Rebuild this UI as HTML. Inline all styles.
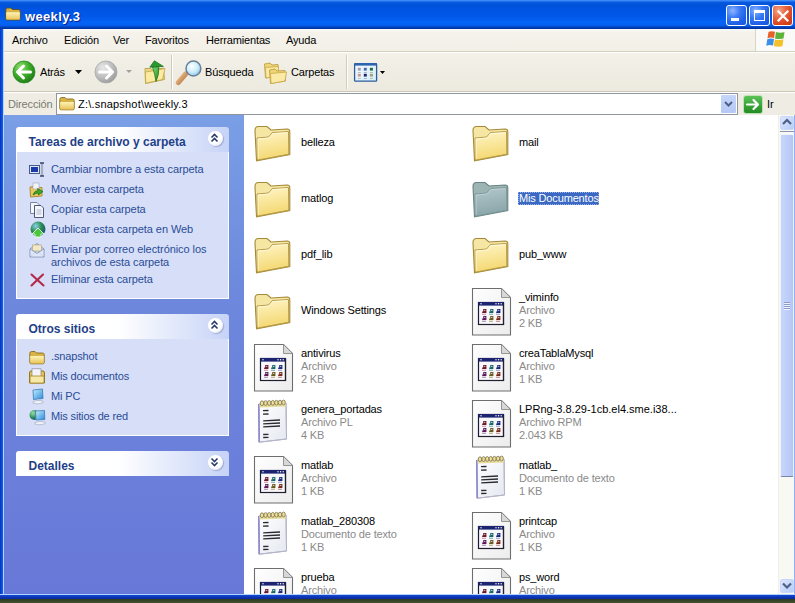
<!DOCTYPE html>
<html><head><meta charset="utf-8"><style>
*{margin:0;padding:0;box-sizing:border-box}
html,body{width:795px;height:603px;overflow:hidden}
body{position:relative;background:#5d6b3a;font-family:"Liberation Sans",sans-serif;font-size:11px;color:#000}
.a{position:absolute}
.t{position:absolute;white-space:nowrap;line-height:13px;font-size:11px;letter-spacing:-0.15px}
.lk{color:#2a4c98}
.g{color:#8a8a8a}
svg{position:absolute;overflow:visible}
</style></head><body>

<div class="a" style="left:0;top:599px;width:795px;height:4px;background:linear-gradient(#2e3a22,#44522e)"></div>
<div class="a" style="left:0;top:0;width:795px;height:599px;background:#0a3fd6"></div>
<div class="a" style="left:0;top:0;width:795px;height:29px;background:linear-gradient(#3c8cf8 0px,#3a83f5 1px,#0a5ae0 2px,#0052d8 5px,#0054e3 9px,#0057e8 16px,#0563f5 22px,#0461f2 25px,#0347c4 27px,#0035a8 28px,#0035a8 29px)"></div>
<div class="a" style="left:0;top:29px;width:3px;height:570px;background:linear-gradient(90deg,#0832b8,#0d4fe0 60%,#1661f0)"></div>
<div class="a" style="left:3px;top:29px;width:1px;height:565px;background:#b0d4ff"></div>
<div class="a" style="left:0;top:594px;width:795px;height:1px;background:#b0d4ff"></div>
<div class="a" style="left:0;top:595px;width:795px;height:4px;background:linear-gradient(#1448d6,#0c34b0 60%,#0a2a98)"></div>
<svg style="left:5px;top:7px" width="16" height="14" viewBox="0 0 16 14">
<defs><linearGradient id="tf" x1="0" y1="0" x2="0" y2="1"><stop offset="0" stop-color="#fff4b8"/><stop offset="1" stop-color="#e8c458"/></linearGradient></defs>
<path d="M0.8 3 Q0.8 1 2.5 1 L6 1 L7.5 2.5 L13.5 2.5 Q15.2 2.5 15.2 4 L15.2 11.8 Q15.2 13 13.8 13 L2.2 13 Q0.8 13 0.8 11.8 Z" fill="#d8b448" stroke="#5a4a20" stroke-width="0.9"/>
<path d="M1.2 5.3 L14.8 5.3 L14.8 11.8 Q14.8 12.6 14 12.6 L2 12.6 Q1.2 12.6 1.2 11.8 Z" fill="url(#tf)"/>
</svg>
<div class="t" style="left:25px;top:9px;font-size:13px;line-height:15px;font-weight:bold;color:#fff;letter-spacing:0.35px;text-shadow:1px 1px 0 #0a1e8a">weekly.3</div>
<div class="a" style="left:726px;top:5px;width:21px;height:21px;border:1px solid #fff;border-radius:3px;background:radial-gradient(circle at 30% 25%,#8fb4ff 0,#3d7df5 35%,#1f5fe8 70%,#1a55d8 100%)"></div>
<div class="a" style="left:749px;top:5px;width:21px;height:21px;border:1px solid #fff;border-radius:3px;background:radial-gradient(circle at 30% 25%,#8fb4ff 0,#3d7df5 35%,#1f5fe8 70%,#1a55d8 100%)"></div>
<div class="a" style="left:772px;top:5px;width:21px;height:21px;border:1px solid #fff;border-radius:3px;background:radial-gradient(circle at 30% 25%,#f5a98a 0,#e86a45 35%,#d8431e 70%,#c23a18 100%)"></div>
<div class="a" style="left:731px;top:18px;width:8px;height:3px;background:#fff"></div>
<div class="a" style="left:754px;top:10px;width:11px;height:11px;border:1px solid #fff;border-top-width:3px"></div>
<svg style="left:777px;top:10px" width="12" height="12" viewBox="0 0 12 12"><path d="M1.5 1.5 L10.5 10.5 M10.5 1.5 L1.5 10.5" stroke="#fff" stroke-width="2.2" stroke-linecap="square"/></svg>
<div class="a" style="left:4px;top:29px;width:791px;height:22px;background:linear-gradient(#f8fbfa,#f4f2ea 3px,#f2f0e7)"></div>
<div class="a" style="left:4px;top:51px;width:791px;height:1px;background:#d5d0bd"></div>
<div class="a" style="left:4px;top:52px;width:791px;height:1px;background:#fff"></div>
<div class="t" style="left:12px;top:34px">Archivo</div>
<div class="t" style="left:64px;top:34px">Edición</div>
<div class="t" style="left:113px;top:34px">Ver</div>
<div class="t" style="left:145px;top:34px">Favoritos</div>
<div class="t" style="left:206px;top:34px">Herramientas</div>
<div class="t" style="left:286px;top:34px">Ayuda</div>
<div class="a" style="left:755px;top:29px;width:1px;height:22px;background:#d8d4c4"></div>
<div class="a" style="left:756px;top:29px;width:39px;height:22px;background:#fafaf8"></div>
<svg style="left:766px;top:30px" width="20" height="18" viewBox="0 0 20 18">
<path d="M2.5 2 Q5 0.5 9 1.8 L8 8 Q4.5 7 1.5 8.2 Z" fill="#e8602a"/>
<path d="M10 2 Q13.5 3.2 18.5 2.2 L17.5 8.6 Q13 9.6 9 8.4 Z" fill="#5cb33a"/>
<path d="M1.3 9.2 Q4.5 8 8 9 L7 15.5 Q3.5 14.5 0.3 15.8 Z" fill="#3a8ee6"/>
<path d="M8.8 9.4 Q13 10.6 17.4 9.6 L16.4 16.2 Q12 17.2 7.8 16 Z" fill="#f3c22a"/>
</svg>
<div class="a" style="left:4px;top:53px;width:791px;height:39px;background:linear-gradient(#f3f1e8,#efede3 50%,#edebe0)"></div>
<div class="a" style="left:4px;top:91px;width:791px;height:1px;background:#cbc6b3"></div>
<div class="a" style="left:4px;top:92px;width:791px;height:1px;background:#fff"></div>
<svg style="left:12px;top:60px" width="24" height="24" viewBox="0 0 24 24">
<defs><radialGradient id="gb" cx="0.35" cy="0.3" r="0.75"><stop offset="0" stop-color="#9be07a"/><stop offset="0.5" stop-color="#3fae2a"/><stop offset="1" stop-color="#1f7a18"/></radialGradient></defs>
<circle cx="12" cy="12" r="11" fill="url(#gb)" stroke="#2a8a22" stroke-width="0.8"/>
<path d="M11.5 6 L5.5 12 L11.5 18 M6 12 L18.5 12" fill="none" stroke="#fff" stroke-width="3" stroke-linejoin="round" stroke-linecap="round"/>
</svg>
<div class="t" style="left:40px;top:66px">Atrás</div>
<svg style="left:75px;top:70px" width="7" height="4" viewBox="0 0 7 4"><path d="M0 0 L7 0 L3.5 4 Z" fill="#000"/></svg>
<svg style="left:94px;top:60px" width="24" height="24" viewBox="0 0 24 24">
<defs><radialGradient id="gf" cx="0.35" cy="0.3" r="0.75"><stop offset="0" stop-color="#e8e8e8"/><stop offset="0.6" stop-color="#bdbdbd"/><stop offset="1" stop-color="#9a9a9a"/></radialGradient></defs>
<circle cx="12" cy="12" r="11" fill="url(#gf)" stroke="#a8a8a8" stroke-width="0.8"/>
<path d="M12.5 6 L18.5 12 L12.5 18 M18 12 L5.5 12" fill="none" stroke="#fff" stroke-width="3" stroke-linejoin="round" stroke-linecap="round"/>
</svg>
<svg style="left:126px;top:70px" width="6" height="3" viewBox="0 0 6 3"><path d="M0 0 L6 0 L3 3 Z" fill="#a0a0a0"/></svg>
<svg style="left:143px;top:59px" width="24" height="26" viewBox="0 0 24 26">
<defs><linearGradient id="ua" x1="0" y1="0" x2="1" y2="1"><stop offset="0" stop-color="#7ee07a"/><stop offset="1" stop-color="#1f8a1f"/></linearGradient></defs>
<path d="M2 9.5 L7.5 9.5 L9.5 11 L20.5 9 L21.5 20.5 L2.5 24.5 Z" fill="#f0d882" stroke="#b09840" stroke-width="0.8"/>
<path d="M2.3 13 L12 11.5 L22 9.5 L19.5 20.5 L2.8 24.2 Z" fill="#fbeaa0" stroke="#c0a448" stroke-width="0.8"/>
<path d="M9.5 8 L15.8 7.4 Q16.2 16 13 22.5 Q12 15.5 9.5 8 Z" fill="url(#ua)" stroke="#1a6a1a" stroke-width="0.7"/>
<path d="M6.8 8.2 L11.4 1.8 L20.4 7.4 Z" fill="#2a9a2a" stroke="#1a6a1a" stroke-width="0.7"/>
</svg>
<div class="a" style="left:171px;top:55px;width:1px;height:34px;background:#d0ccbc"></div>
<div class="a" style="left:172px;top:55px;width:1px;height:34px;background:#fff"></div>
<svg style="left:172px;top:55px" width="34" height="34" viewBox="0 0 34 34">
<defs><radialGradient id="gs" cx="0.4" cy="0.35" r="0.7"><stop offset="0" stop-color="#ffffff"/><stop offset="0.55" stop-color="#cdeefa"/><stop offset="1" stop-color="#8ac8e8"/></radialGradient>
<linearGradient id="gh" x1="0" y1="0" x2="1" y2="1"><stop offset="0" stop-color="#f4c890"/><stop offset="1" stop-color="#b07040"/></linearGradient></defs>
<path d="M6.2 27.6 L13.6 19" stroke="url(#gh)" stroke-width="5" stroke-linecap="round"/>
<circle cx="21.4" cy="13.5" r="7.4" fill="url(#gs)" stroke="#6a7e98" stroke-width="1.5"/>
</svg>
<div class="t" style="left:205px;top:66px">Búsqueda</div>
<svg style="left:263px;top:61px" width="25" height="23" viewBox="0 0 25 23">
<path d="M1.5 3 L7 2 L9 4 L15 3.5 L15.5 15 L2.5 17 Z" fill="#f0d478" stroke="#b89838" stroke-width="0.8"/>
<path d="M2.5 6.5 L15.5 5.5 L15 15 L3 17 Z" fill="#fbe9a6" stroke="#c8a840" stroke-width="0.8"/>
<path d="M6.5 9 L12 8 L14 10 L22 9.5 L22.5 20 L7.5 22.5 Z" fill="#f0d478" stroke="#b89838" stroke-width="0.8"/>
<path d="M7.5 12.5 L23.5 11 L22 20 L8 22.5 Z" fill="#fbe9a6" stroke="#c8a840" stroke-width="0.8"/>
</svg>
<div class="t" style="left:291px;top:66px">Carpetas</div>
<div class="a" style="left:346px;top:55px;width:1px;height:34px;background:#d0ccbc"></div>
<div class="a" style="left:347px;top:55px;width:1px;height:34px;background:#fff"></div>
<svg style="left:350px;top:58px" width="30" height="28" viewBox="0 0 30 28">
<defs><linearGradient id="vb" x1="0" y1="0" x2="1" y2="1"><stop offset="0" stop-color="#f4fbff"/><stop offset="1" stop-color="#d4ecfa"/></linearGradient></defs>
<rect x="4.6" y="5.6" width="22" height="17.6" rx="0.8" fill="url(#vb)" stroke="#2c5c9c" stroke-width="1.3"/>
<rect x="4.6" y="5" width="22" height="2.6" fill="#2c64b0"/>
<rect x="7.8" y="9.8" width="3" height="2.8" fill="#a898b0"/><rect x="13.8" y="9.8" width="3" height="2.8" fill="#4a6ab0"/><rect x="19.9" y="9.8" width="3" height="2.8" fill="#2a6a3a"/>
<rect x="7.8" y="15.8" width="3" height="2.8" fill="#d09888"/><rect x="13.8" y="15.8" width="3" height="2.8" fill="#1a2a6a"/><rect x="19.9" y="15.8" width="3" height="2.8" fill="#a8a078"/>
<rect x="7.8" y="14.2" width="3" height="0.7" fill="#aaa"/><rect x="13.8" y="14.2" width="3" height="0.7" fill="#99a"/><rect x="19.9" y="14.2" width="3" height="0.7" fill="#9a9"/>
<rect x="7.8" y="20" width="3" height="0.7" fill="#aaa"/><rect x="13.8" y="20" width="3" height="0.7" fill="#99a"/><rect x="19.9" y="20" width="3" height="0.7" fill="#aa9"/>
</svg>
<svg style="left:380px;top:71px" width="5" height="3" viewBox="0 0 5 3"><path d="M0 0 L5 0 L2.5 3 Z" fill="#000"/></svg>
<div class="a" style="left:4px;top:93px;width:791px;height:22px;background:#efede3"></div>
<div class="t g" style="left:8px;top:98px;color:#7a7a70">Dirección</div>
<div class="a" style="left:56px;top:93px;width:682px;height:22px;background:#fff;border:1px solid #8f969e"></div>
<svg style="left:59px;top:96px" width="16" height="15" viewBox="0 0 16 15">
<defs><linearGradient id="af" x1="0" y1="0" x2="0" y2="1"><stop offset="0" stop-color="#fff4b8"/><stop offset="1" stop-color="#e8c458"/></linearGradient></defs>
<path d="M0.8 3.5 Q0.8 1.5 2.5 1.5 L6 1.5 L7.5 3 L13.5 3 Q15.2 3 15.2 4.5 L15.2 12.5 Q15.2 13.8 13.8 13.8 L2.2 13.8 Q0.8 13.8 0.8 12.5 Z" fill="#d8b448" stroke="#8a6a18" stroke-width="0.9"/>
<path d="M1.2 6 L14.8 6 L14.8 12.6 Q14.8 13.4 14 13.4 L2 13.4 Q1.2 13.4 1.2 12.6 Z" fill="url(#af)"/>
</svg>
<div class="t" style="left:78px;top:98px;letter-spacing:0.2px">Z:\.snapshot\weekly.3</div>
<div class="a" style="left:721px;top:95px;width:15px;height:18px;border-radius:1px;background:linear-gradient(#c6d6fa,#b4c8f4)"></div>
<svg style="left:724px;top:101px" width="9" height="6" viewBox="0 0 9 6"><path d="M1 1 L4.5 4.5 L8 1" fill="none" stroke="#4d6185" stroke-width="2"/></svg>
<svg style="left:743px;top:95px" width="20" height="19" viewBox="0 0 20 19">
<defs><linearGradient id="gg" x1="0" y1="0" x2="0" y2="1"><stop offset="0" stop-color="#5cc456"/><stop offset="1" stop-color="#1f8a22"/></linearGradient></defs>
<rect x="0.5" y="0.5" width="19" height="18" rx="2.5" fill="url(#gg)" stroke="#c8e8c0" stroke-width="0.8"/>
<path d="M4 9.5 L14.5 9.5 M10.5 5 L15 9.5 L10.5 14" fill="none" stroke="#fff" stroke-width="2.2" stroke-linecap="round" stroke-linejoin="round"/>
</svg>
<div class="t" style="left:767px;top:98px">Ir</div>
<div class="a" style="left:4px;top:115px;width:240px;height:479px;background:linear-gradient(#7a9fe6 0px,#6d88dc 180px,#6878d8 479px)"></div>
<div class="a" style="left:16px;top:127px;width:213px;height:25px;border-radius:3px 3px 0 0;background:linear-gradient(90deg,#ffffff 0%,#ffffff 48%,#c6d3f7 100%)"></div>
<div class="t" style="left:28.5px;top:135px;font-size:12px;line-height:14px;font-weight:bold;color:#1f3f88;letter-spacing:0">Tareas de archivo y carpeta</div>
<div class="a" style="left:207.5px;top:130.5px;width:15px;height:15px;border-radius:50%;background:radial-gradient(circle at 40% 35%,#ffffff 55%,#dde3f2 80%,#b8c2dc 100%);box-shadow:1px 1px 1px rgba(120,130,170,0.5)"></div>
<svg style="left:208px;top:132px" width="13" height="13" viewBox="0 0 13 13"><path d="M3.5 5.5 L6.5 2.5 L9.5 5.5 M3.5 9.5 L6.5 6.5 L9.5 9.5" fill="none" stroke="#2a3a6a" stroke-width="1.6"/></svg>
<div class="a" style="left:16px;top:152px;width:213px;height:147px;background:#d6dff7;border:1px solid #fff;border-top:0"></div>
<div class="a" style="left:16px;top:314px;width:213px;height:25px;border-radius:3px 3px 0 0;background:linear-gradient(90deg,#ffffff 0%,#ffffff 48%,#c6d3f7 100%)"></div>
<div class="t" style="left:28.5px;top:322px;font-size:12px;line-height:14px;font-weight:bold;color:#1f3f88;letter-spacing:0">Otros sitios</div>
<div class="a" style="left:207.5px;top:317.5px;width:15px;height:15px;border-radius:50%;background:radial-gradient(circle at 40% 35%,#ffffff 55%,#dde3f2 80%,#b8c2dc 100%);box-shadow:1px 1px 1px rgba(120,130,170,0.5)"></div>
<svg style="left:208px;top:319px" width="13" height="13" viewBox="0 0 13 13"><path d="M3.5 5.5 L6.5 2.5 L9.5 5.5 M3.5 9.5 L6.5 6.5 L9.5 9.5" fill="none" stroke="#2a3a6a" stroke-width="1.6"/></svg>
<div class="a" style="left:16px;top:339px;width:213px;height:97px;background:#d6dff7;border:1px solid #fff;border-top:0"></div>
<div class="a" style="left:16px;top:451px;width:213px;height:25px;border-radius:3px 3px 0 0;background:linear-gradient(90deg,#ffffff 0%,#ffffff 48%,#c6d3f7 100%)"></div>
<div class="t" style="left:28.5px;top:459px;font-size:12px;line-height:14px;font-weight:bold;color:#1f3f88;letter-spacing:0">Detalles</div>
<div class="a" style="left:207.5px;top:454.5px;width:15px;height:15px;border-radius:50%;background:radial-gradient(circle at 40% 35%,#ffffff 55%,#dde3f2 80%,#b8c2dc 100%);box-shadow:1px 1px 1px rgba(120,130,170,0.5)"></div>
<svg style="left:208px;top:456px" width="13" height="13" viewBox="0 0 13 13"><path d="M3.5 2.5 L6.5 5.5 L9.5 2.5 M3.5 6.5 L6.5 9.5 L9.5 6.5" fill="none" stroke="#2a3a6a" stroke-width="1.6"/></svg>
<div class="t lk" style="left:51px;top:163px;letter-spacing:-0.07px">Cambiar nombre a esta carpeta</div>
<div class="t lk" style="left:51px;top:183px;letter-spacing:-0.07px">Mover esta carpeta</div>
<div class="t lk" style="left:51px;top:203px;letter-spacing:-0.07px">Copiar esta carpeta</div>
<div class="t lk" style="left:51px;top:223px;letter-spacing:-0.07px">Publicar esta carpeta en Web</div>
<div class="t lk" style="left:51px;top:243px;letter-spacing:-0.07px">Enviar por correo electrónico los</div>
<div class="t lk" style="left:51px;top:256px;letter-spacing:-0.07px">archivos de esta carpeta</div>
<div class="t lk" style="left:51px;top:273px;letter-spacing:-0.07px">Eliminar esta carpeta</div>
<div class="t lk" style="left:51px;top:350px">.snapshot</div>
<div class="t lk" style="left:51px;top:370px">Mis documentos</div>
<div class="t lk" style="left:51px;top:390px">Mi PC</div>
<div class="t lk" style="left:51px;top:409.5px">Mis sitios de red</div>
<svg style="left:29px;top:162px" width="16" height="16" viewBox="0 0 16 16">
<rect x="0.5" y="3.5" width="10" height="8" fill="#dfe6f5" stroke="#4a5a8a"/>
<rect x="2" y="5" width="7" height="5" fill="#1a3aa8"/>
<path d="M11 1 L15 1 M13 1 L13 14 M11 14 L15 14" stroke="#3a4a6a" stroke-width="1.3" fill="none"/>
<rect x="11.5" y="2" width="3" height="11" fill="#c8cede" opacity="0.6"/>
</svg>
<svg style="left:29px;top:182px" width="16" height="16" viewBox="0 0 16 16">
<path d="M1 5 L6 4.5 L7 6 L13 5.5 L13 14 L1.5 15 Z" fill="#eac860" stroke="#9a7a20" stroke-width="0.8"/>
<rect x="4" y="1" width="6" height="6" fill="#f4f4f8" stroke="#a0a0b8" stroke-width="0.6"/>
<path d="M4 13 Q5 9 9 8.5 L8.5 6.5 L14 9.5 L9.5 13 L9.3 11 Q7 11 4 13 Z" fill="#3aa82a" stroke="#1a6a1a" stroke-width="0.7"/>
</svg>
<svg style="left:29px;top:202px" width="16" height="16" viewBox="0 0 16 16">
<path d="M1.5 0.5 L8 0.5 L10 2.5 L10 11.5 L1.5 11.5 Z" fill="#f4f6fb" stroke="#6a7a9a" stroke-width="0.9"/>
<path d="M5.5 3.5 L12 3.5 L14.5 6 L14.5 15.5 L5.5 15.5 Z" fill="#f4f6fb" stroke="#3a4a6a" stroke-width="0.9"/>
<path d="M7.5 8 L12.5 8 M7.5 10 L12.5 10 M7.5 12 L12.5 12" stroke="#9aaac8" stroke-width="0.8"/>
</svg>
<svg style="left:30px;top:221px" width="16" height="16" viewBox="0 0 16 16">
<defs><radialGradient id="glb" cx="0.35" cy="0.3" r="0.8"><stop offset="0" stop-color="#8ad0f0"/><stop offset="0.5" stop-color="#2a8a4a"/><stop offset="1" stop-color="#1a4a8a"/></radialGradient></defs>
<circle cx="8" cy="8" r="7.5" fill="url(#glb)"/>
<path d="M2 13 L8 7 L14 13 L11 13 L11 16 L5 16 L5 13 Z" fill="#4ac83a" stroke="#fff" stroke-width="0.8"/>
</svg>
<svg style="left:29px;top:242px" width="16" height="16" viewBox="0 0 16 16">
<path d="M1 7 L8 1.5 L15 7 L15 15 L1 15 Z" fill="#c8d8f0" stroke="#7a8ab0" stroke-width="0.8"/>
<rect x="3.5" y="3" width="9" height="6" fill="#f0e8c8" stroke="#b0a070" stroke-width="0.6"/>
<path d="M1 7 L8 11.5 L15 7 M1 15 L6.5 10 M15 15 L9.5 10" fill="none" stroke="#7a8ab0" stroke-width="0.8"/>
<path d="M1.5 7.5 L8 12 L14.5 7.5 L14.5 14.5 L1.5 14.5 Z" fill="#e8f0fc" opacity="0.7"/>
</svg>
<svg style="left:30px;top:273px" width="15" height="14" viewBox="0 0 15 14"><path d="M1.5 1.5 L13.5 12.5 M13 1.5 L1.5 12.5" stroke="#b42848" stroke-width="2.1" stroke-linecap="round"/></svg>
<svg style="left:29px;top:350px" width="16" height="15" viewBox="0 0 16 15">
<defs><linearGradient id="sf" x1="0" y1="0" x2="0" y2="1"><stop offset="0" stop-color="#fff4b8"/><stop offset="1" stop-color="#e8c458"/></linearGradient></defs>
<path d="M0.8 3.5 Q0.8 1.5 2.5 1.5 L6 1.5 L7.5 3 L13.5 3 Q15.2 3 15.2 4.5 L15.2 12.5 Q15.2 13.8 13.8 13.8 L2.2 13.8 Q0.8 13.8 0.8 12.5 Z" fill="#d8b448" stroke="#8a6a18" stroke-width="0.9"/>
<path d="M1.2 6 L14.8 6 L14.8 12.6 Q14.8 13.4 14 13.4 L2 13.4 Q1.2 13.4 1.2 12.6 Z" fill="url(#sf)"/>
</svg>
<svg style="left:29px;top:368px" width="16" height="16" viewBox="0 0 16 16">
<path d="M0.5 5 Q0.5 3 2 3 L14 3 Q15.5 3 15.5 5 L15.5 15 L0.5 15 Z" fill="#e8c050" stroke="#8a6a10" stroke-width="0.9"/>
<rect x="3" y="0.8" width="9" height="9" fill="#f4f4f8" stroke="#8a8aa0" stroke-width="0.7"/>
<path d="M1 8 L15 8 L15 15 L1 15 Z" fill="#f6e8a8" stroke="#a8841c" stroke-width="0.8"/>
</svg>
<svg style="left:30px;top:388px" width="16" height="17" viewBox="0 0 16 17">
<defs><linearGradient id="pcs" x1="0" y1="0" x2="1" y2="1"><stop offset="0" stop-color="#c8f0ff"/><stop offset="1" stop-color="#2a8ad8"/></linearGradient></defs>
<path d="M3 2 L12.5 1 L13 10.5 L3.5 11.5 Z" fill="url(#pcs)" stroke="#3a7ab8" stroke-width="0.8"/>
<path d="M3 13.5 Q8 11.5 13 13 L13 14.8 Q8 16.8 3 15.2 Z" fill="#f0f2f8" stroke="#9aa4b8" stroke-width="0.6"/>
<path d="M7 11.3 L9 11.1 L9 12.6 L7 12.8 Z" fill="#b8c0d0"/>
</svg>
<svg style="left:29px;top:408px" width="17" height="18" viewBox="0 0 17 18">
<defs><radialGradient id="nglb" cx="0.35" cy="0.3" r="0.8"><stop offset="0" stop-color="#9ae0a0"/><stop offset="0.6" stop-color="#2a8a5a"/><stop offset="1" stop-color="#1a4a8a"/></radialGradient>
<linearGradient id="nps" x1="0" y1="0" x2="1" y2="1"><stop offset="0" stop-color="#c8f0ff"/><stop offset="1" stop-color="#2a8ad8"/></linearGradient></defs>
<circle cx="5.5" cy="7" r="5" fill="url(#nglb)"/>
<path d="M6.5 3 L15.5 2.5 L15.8 11.5 L7 12 Z" fill="url(#nps)" stroke="#3a7ab8" stroke-width="0.8"/>
<path d="M6 14.5 Q11 12.5 16 14 L16 15.8 Q11 17.6 6 16.2 Z" fill="#f0f2f8" stroke="#9aa4b8" stroke-width="0.6"/>
</svg>
<div class="a" style="left:244px;top:115px;width:534px;height:479px;background:#fff"></div>
<div class="a" style="left:778px;top:115px;width:17px;height:479px;background:#f9f9f4;border-left:1px solid #efeee8"></div>
<div class="a" style="left:794px;top:115px;width:1px;height:479px;background:#94b0f4"></div>
<div class="a" style="left:780px;top:116px;width:14px;height:14px;border-radius:2px;background:linear-gradient(135deg,#dbe6ff,#b8ccf8);border:1px solid #c8d8fa"></div>
<svg style="left:780px;top:116px" width="14" height="13" viewBox="0 0 13 13"><path d="M2.5 8 L6.5 4 L10.5 8" fill="none" stroke="#4d6185" stroke-width="2.2"/></svg>
<div class="a" style="left:780px;top:131px;width:14px;height:1px;background:#8a94b0"></div>
<div class="a" style="left:780px;top:579px;width:14px;height:14px;border-radius:2px;background:linear-gradient(135deg,#dbe6ff,#b8ccf8);border:1px solid #c8d8fa"></div>
<svg style="left:780px;top:579px" width="14" height="13" viewBox="0 0 13 13"><path d="M2.5 4.5 L6.5 8.5 L10.5 4.5" fill="none" stroke="#4d6185" stroke-width="2.2"/></svg>
<div class="a" style="left:780px;top:134px;width:14px;height:343px;border-radius:2px;background:linear-gradient(90deg,#c8d6fb,#bccdf8 60%,#b4c6f4);border:1px solid #eef2fd;border-bottom:1px solid #7a84a4"></div>
<div class="a" style="left:784px;top:302px;width:6px;height:1px;background:#8c9cc8"></div>
<div class="a" style="left:784px;top:303px;width:6px;height:1px;background:#eef2fe"></div>
<div class="a" style="left:784px;top:304px;width:6px;height:1px;background:#8c9cc8"></div>
<div class="a" style="left:784px;top:305px;width:6px;height:1px;background:#eef2fe"></div>
<div class="a" style="left:784px;top:306px;width:6px;height:1px;background:#8c9cc8"></div>
<div class="a" style="left:784px;top:307px;width:6px;height:1px;background:#eef2fe"></div>
<div class="a" style="left:784px;top:308px;width:6px;height:1px;background:#8c9cc8"></div>
<div class="a" style="left:784px;top:309px;width:6px;height:1px;background:#eef2fe"></div>
<svg style="left:250px;top:120px" width="45" height="45" viewBox="0 0 45 45">
<defs><linearGradient id="fy250120" x1="0" y1="0" x2="0.2" y2="1"><stop offset="0" stop-color="#fff6c8"/><stop offset="1" stop-color="#f4d872"/></linearGradient></defs>
<path d="M5 10.5 Q5 6.5 8.5 6.5 L17 6.5 L21 10 L37 9 Q39.8 9 39.8 11.5 L39.8 34.5 L6.5 40.8 Z" fill="#f6e6a4" stroke="#a48a38" stroke-width="1.1"/>
<path d="M7 18 L18.5 17 L22.5 12.5 L38.5 11.5 L38.8 34.2 L7.2 40.2 Z" fill="url(#fy250120)" stroke="#b09440" stroke-width="0.9"/>
<path d="M8.2 38.5 L8 19 L19 18 L23 13.6 L37.5 12.7" fill="none" stroke="#fffbe8" stroke-width="0.9" opacity="0.8"/>
</svg>
<div class="t" style="left:301px;top:136.0px">belleza</div>
<svg style="left:468px;top:120px" width="45" height="45" viewBox="0 0 45 45">
<defs><linearGradient id="fy468120" x1="0" y1="0" x2="0.2" y2="1"><stop offset="0" stop-color="#fff6c8"/><stop offset="1" stop-color="#f4d872"/></linearGradient></defs>
<path d="M5 10.5 Q5 6.5 8.5 6.5 L17 6.5 L21 10 L37 9 Q39.8 9 39.8 11.5 L39.8 34.5 L6.5 40.8 Z" fill="#f6e6a4" stroke="#a48a38" stroke-width="1.1"/>
<path d="M7 18 L18.5 17 L22.5 12.5 L38.5 11.5 L38.8 34.2 L7.2 40.2 Z" fill="url(#fy468120)" stroke="#b09440" stroke-width="0.9"/>
<path d="M8.2 38.5 L8 19 L19 18 L23 13.6 L37.5 12.7" fill="none" stroke="#fffbe8" stroke-width="0.9" opacity="0.8"/>
</svg>
<div class="t" style="left:519px;top:136.0px">mail</div>
<svg style="left:250px;top:176px" width="45" height="45" viewBox="0 0 45 45">
<defs><linearGradient id="fy250176" x1="0" y1="0" x2="0.2" y2="1"><stop offset="0" stop-color="#fff6c8"/><stop offset="1" stop-color="#f4d872"/></linearGradient></defs>
<path d="M5 10.5 Q5 6.5 8.5 6.5 L17 6.5 L21 10 L37 9 Q39.8 9 39.8 11.5 L39.8 34.5 L6.5 40.8 Z" fill="#f6e6a4" stroke="#a48a38" stroke-width="1.1"/>
<path d="M7 18 L18.5 17 L22.5 12.5 L38.5 11.5 L38.8 34.2 L7.2 40.2 Z" fill="url(#fy250176)" stroke="#b09440" stroke-width="0.9"/>
<path d="M8.2 38.5 L8 19 L19 18 L23 13.6 L37.5 12.7" fill="none" stroke="#fffbe8" stroke-width="0.9" opacity="0.8"/>
</svg>
<div class="t" style="left:301px;top:192.0px">matlog</div>
<svg style="left:468px;top:176px" width="45" height="45" viewBox="0 0 45 45">
<defs><linearGradient id="fs468176" x1="0" y1="0" x2="0.2" y2="1"><stop offset="0" stop-color="#b4c8cc"/><stop offset="1" stop-color="#8aa6aa"/></linearGradient></defs>
<path d="M5 10.5 Q5 6.5 8.5 6.5 L17 6.5 L21 10 L37 9 Q39.8 9 39.8 11.5 L39.8 34.5 L6.5 40.8 Z" fill="#9db4b4" stroke="#6a8282" stroke-width="1.1"/>
<path d="M7 18 L18.5 17 L22.5 12.5 L38.5 11.5 L38.8 34.2 L7.2 40.2 Z" fill="url(#fs468176)" stroke="#7a9494" stroke-width="0.9"/>
<path d="M8.2 38.5 L8 19 L19 18 L23 13.6 L37.5 12.7" fill="none" stroke="#c4d4d8" stroke-width="0.9" opacity="0.8"/>
</svg>
<div class="a" style="left:518px;top:191.5px;width:81px;height:13px;background:#3a68c2;outline:1px dotted #9ab0e0;outline-offset:-1px"></div>
<div class="t" style="left:519px;top:192.0px;color:#fff">Mis Documentos</div>
<svg style="left:250px;top:232px" width="45" height="45" viewBox="0 0 45 45">
<defs><linearGradient id="fy250232" x1="0" y1="0" x2="0.2" y2="1"><stop offset="0" stop-color="#fff6c8"/><stop offset="1" stop-color="#f4d872"/></linearGradient></defs>
<path d="M5 10.5 Q5 6.5 8.5 6.5 L17 6.5 L21 10 L37 9 Q39.8 9 39.8 11.5 L39.8 34.5 L6.5 40.8 Z" fill="#f6e6a4" stroke="#a48a38" stroke-width="1.1"/>
<path d="M7 18 L18.5 17 L22.5 12.5 L38.5 11.5 L38.8 34.2 L7.2 40.2 Z" fill="url(#fy250232)" stroke="#b09440" stroke-width="0.9"/>
<path d="M8.2 38.5 L8 19 L19 18 L23 13.6 L37.5 12.7" fill="none" stroke="#fffbe8" stroke-width="0.9" opacity="0.8"/>
</svg>
<div class="t" style="left:301px;top:248.0px">pdf_lib</div>
<svg style="left:468px;top:232px" width="45" height="45" viewBox="0 0 45 45">
<defs><linearGradient id="fy468232" x1="0" y1="0" x2="0.2" y2="1"><stop offset="0" stop-color="#fff6c8"/><stop offset="1" stop-color="#f4d872"/></linearGradient></defs>
<path d="M5 10.5 Q5 6.5 8.5 6.5 L17 6.5 L21 10 L37 9 Q39.8 9 39.8 11.5 L39.8 34.5 L6.5 40.8 Z" fill="#f6e6a4" stroke="#a48a38" stroke-width="1.1"/>
<path d="M7 18 L18.5 17 L22.5 12.5 L38.5 11.5 L38.8 34.2 L7.2 40.2 Z" fill="url(#fy468232)" stroke="#b09440" stroke-width="0.9"/>
<path d="M8.2 38.5 L8 19 L19 18 L23 13.6 L37.5 12.7" fill="none" stroke="#fffbe8" stroke-width="0.9" opacity="0.8"/>
</svg>
<div class="t" style="left:519px;top:248.0px">pub_www</div>
<svg style="left:250px;top:288px" width="45" height="45" viewBox="0 0 45 45">
<defs><linearGradient id="fy250288" x1="0" y1="0" x2="0.2" y2="1"><stop offset="0" stop-color="#fff6c8"/><stop offset="1" stop-color="#f4d872"/></linearGradient></defs>
<path d="M5 10.5 Q5 6.5 8.5 6.5 L17 6.5 L21 10 L37 9 Q39.8 9 39.8 11.5 L39.8 34.5 L6.5 40.8 Z" fill="#f6e6a4" stroke="#a48a38" stroke-width="1.1"/>
<path d="M7 18 L18.5 17 L22.5 12.5 L38.5 11.5 L38.8 34.2 L7.2 40.2 Z" fill="url(#fy250288)" stroke="#b09440" stroke-width="0.9"/>
<path d="M8.2 38.5 L8 19 L19 18 L23 13.6 L37.5 12.7" fill="none" stroke="#fffbe8" stroke-width="0.9" opacity="0.8"/>
</svg>
<div class="t" style="left:301px;top:304.0px">Windows Settings</div>
<svg style="left:468px;top:284px" width="48" height="52" viewBox="0 0 48 52">
<defs><linearGradient id="pg472288" x1="0" y1="0" x2="1" y2="1"><stop offset="0" stop-color="#ffffff"/><stop offset="1" stop-color="#ececec"/></linearGradient></defs>
<path d="M4.5 4.5 L33.5 4.5 L42.5 13.5 L42.5 51 L4.5 51 Z" fill="url(#pg472288)" stroke="#6e6e6e" stroke-width="1.1"/>
<path d="M33.5 4.5 L33.5 13.5 L42.5 13.5 Z" fill="#d8d8d8" stroke="#8a8a8a" stroke-width="0.9"/>
<rect x="10.5" y="18.5" width="25" height="22" fill="#f8f8fa" stroke="#1a1a3a" stroke-width="1.2"/>
<rect x="10.5" y="18" width="25" height="3.6" fill="#1a2470"/>
<circle cx="13" cy="19.8" r="0.7" fill="#fff"/><circle cx="28" cy="19.8" r="0.7" fill="#fff"/><circle cx="30.6" cy="19.8" r="0.7" fill="#fff"/><circle cx="33.2" cy="19.8" r="0.7" fill="#fff"/>
<path d="M15.2 25 h3.2 v4 h-4.2 v-1.6 h1 z" fill="#6a1828"/><circle cx="16.8" cy="26.3" r="0.6" fill="#fff"/>
<path d="M22.2 25 h3.2 v4 h-4.2 v-1.6 h1 z" fill="#1a6a6a"/><circle cx="23.8" cy="26.3" r="0.6" fill="#fff"/>
<path d="M29.2 25 h3.2 v4 h-4.2 v-1.6 h1 z" fill="#1a2a80"/><circle cx="30.8" cy="26.3" r="0.6" fill="#fff"/>
<path d="M15.2 32 h3.2 v4 h-4.2 v-1.6 h1 z" fill="#5a1a5a"/><circle cx="16.8" cy="33.3" r="0.6" fill="#fff"/>
<path d="M22.2 32 h3.2 v4 h-4.2 v-1.6 h1 z" fill="#6a5a1a"/><circle cx="23.8" cy="33.3" r="0.6" fill="#fff"/>
<path d="M29.2 32 h3.2 v4 h-4.2 v-1.6 h1 z" fill="#7a2a1a"/><circle cx="30.8" cy="33.3" r="0.6" fill="#fff"/>
<rect x="14" y="29.8" width="4" height="0.8" fill="#c07080"/><rect x="21" y="29.8" width="4" height="0.8" fill="#608aa0"/><rect x="28" y="29.8" width="4" height="0.8" fill="#8080b0"/>
<rect x="14" y="36.8" width="4" height="0.8" fill="#906090"/><rect x="21" y="36.8" width="4" height="0.8" fill="#a09050"/><rect x="28" y="36.8" width="4" height="0.8" fill="#b06050"/>
<path d="M11 40.5 L35.5 40.5 L35.5 19" fill="none" stroke="#202030" stroke-width="1.2"/>
</svg>
<div class="t" style="left:519px;top:291.0px">_viminfo</div>
<div class="t g" style="left:519px;top:304.0px">Archivo</div>
<div class="t g" style="left:519px;top:317.0px">2 KB</div>
<svg style="left:250px;top:340px" width="48" height="52" viewBox="0 0 48 52">
<defs><linearGradient id="pg254344" x1="0" y1="0" x2="1" y2="1"><stop offset="0" stop-color="#ffffff"/><stop offset="1" stop-color="#ececec"/></linearGradient></defs>
<path d="M4.5 4.5 L33.5 4.5 L42.5 13.5 L42.5 51 L4.5 51 Z" fill="url(#pg254344)" stroke="#6e6e6e" stroke-width="1.1"/>
<path d="M33.5 4.5 L33.5 13.5 L42.5 13.5 Z" fill="#d8d8d8" stroke="#8a8a8a" stroke-width="0.9"/>
<rect x="10.5" y="18.5" width="25" height="22" fill="#f8f8fa" stroke="#1a1a3a" stroke-width="1.2"/>
<rect x="10.5" y="18" width="25" height="3.6" fill="#1a2470"/>
<circle cx="13" cy="19.8" r="0.7" fill="#fff"/><circle cx="28" cy="19.8" r="0.7" fill="#fff"/><circle cx="30.6" cy="19.8" r="0.7" fill="#fff"/><circle cx="33.2" cy="19.8" r="0.7" fill="#fff"/>
<path d="M15.2 25 h3.2 v4 h-4.2 v-1.6 h1 z" fill="#6a1828"/><circle cx="16.8" cy="26.3" r="0.6" fill="#fff"/>
<path d="M22.2 25 h3.2 v4 h-4.2 v-1.6 h1 z" fill="#1a6a6a"/><circle cx="23.8" cy="26.3" r="0.6" fill="#fff"/>
<path d="M29.2 25 h3.2 v4 h-4.2 v-1.6 h1 z" fill="#1a2a80"/><circle cx="30.8" cy="26.3" r="0.6" fill="#fff"/>
<path d="M15.2 32 h3.2 v4 h-4.2 v-1.6 h1 z" fill="#5a1a5a"/><circle cx="16.8" cy="33.3" r="0.6" fill="#fff"/>
<path d="M22.2 32 h3.2 v4 h-4.2 v-1.6 h1 z" fill="#6a5a1a"/><circle cx="23.8" cy="33.3" r="0.6" fill="#fff"/>
<path d="M29.2 32 h3.2 v4 h-4.2 v-1.6 h1 z" fill="#7a2a1a"/><circle cx="30.8" cy="33.3" r="0.6" fill="#fff"/>
<rect x="14" y="29.8" width="4" height="0.8" fill="#c07080"/><rect x="21" y="29.8" width="4" height="0.8" fill="#608aa0"/><rect x="28" y="29.8" width="4" height="0.8" fill="#8080b0"/>
<rect x="14" y="36.8" width="4" height="0.8" fill="#906090"/><rect x="21" y="36.8" width="4" height="0.8" fill="#a09050"/><rect x="28" y="36.8" width="4" height="0.8" fill="#b06050"/>
<path d="M11 40.5 L35.5 40.5 L35.5 19" fill="none" stroke="#202030" stroke-width="1.2"/>
</svg>
<div class="t" style="left:301px;top:347.0px">antivirus</div>
<div class="t g" style="left:301px;top:360.0px">Archivo</div>
<div class="t g" style="left:301px;top:373.0px">2 KB</div>
<svg style="left:468px;top:340px" width="48" height="52" viewBox="0 0 48 52">
<defs><linearGradient id="pg472344" x1="0" y1="0" x2="1" y2="1"><stop offset="0" stop-color="#ffffff"/><stop offset="1" stop-color="#ececec"/></linearGradient></defs>
<path d="M4.5 4.5 L33.5 4.5 L42.5 13.5 L42.5 51 L4.5 51 Z" fill="url(#pg472344)" stroke="#6e6e6e" stroke-width="1.1"/>
<path d="M33.5 4.5 L33.5 13.5 L42.5 13.5 Z" fill="#d8d8d8" stroke="#8a8a8a" stroke-width="0.9"/>
<rect x="10.5" y="18.5" width="25" height="22" fill="#f8f8fa" stroke="#1a1a3a" stroke-width="1.2"/>
<rect x="10.5" y="18" width="25" height="3.6" fill="#1a2470"/>
<circle cx="13" cy="19.8" r="0.7" fill="#fff"/><circle cx="28" cy="19.8" r="0.7" fill="#fff"/><circle cx="30.6" cy="19.8" r="0.7" fill="#fff"/><circle cx="33.2" cy="19.8" r="0.7" fill="#fff"/>
<path d="M15.2 25 h3.2 v4 h-4.2 v-1.6 h1 z" fill="#6a1828"/><circle cx="16.8" cy="26.3" r="0.6" fill="#fff"/>
<path d="M22.2 25 h3.2 v4 h-4.2 v-1.6 h1 z" fill="#1a6a6a"/><circle cx="23.8" cy="26.3" r="0.6" fill="#fff"/>
<path d="M29.2 25 h3.2 v4 h-4.2 v-1.6 h1 z" fill="#1a2a80"/><circle cx="30.8" cy="26.3" r="0.6" fill="#fff"/>
<path d="M15.2 32 h3.2 v4 h-4.2 v-1.6 h1 z" fill="#5a1a5a"/><circle cx="16.8" cy="33.3" r="0.6" fill="#fff"/>
<path d="M22.2 32 h3.2 v4 h-4.2 v-1.6 h1 z" fill="#6a5a1a"/><circle cx="23.8" cy="33.3" r="0.6" fill="#fff"/>
<path d="M29.2 32 h3.2 v4 h-4.2 v-1.6 h1 z" fill="#7a2a1a"/><circle cx="30.8" cy="33.3" r="0.6" fill="#fff"/>
<rect x="14" y="29.8" width="4" height="0.8" fill="#c07080"/><rect x="21" y="29.8" width="4" height="0.8" fill="#608aa0"/><rect x="28" y="29.8" width="4" height="0.8" fill="#8080b0"/>
<rect x="14" y="36.8" width="4" height="0.8" fill="#906090"/><rect x="21" y="36.8" width="4" height="0.8" fill="#a09050"/><rect x="28" y="36.8" width="4" height="0.8" fill="#b06050"/>
<path d="M11 40.5 L35.5 40.5 L35.5 19" fill="none" stroke="#202030" stroke-width="1.2"/>
</svg>
<div class="t" style="left:519px;top:347.0px">creaTablaMysql</div>
<div class="t g" style="left:519px;top:360.0px">Archivo</div>
<div class="t g" style="left:519px;top:373.0px">1 KB</div>
<svg style="left:252px;top:395px" width="44" height="52" viewBox="0 0 44 52">
<defs><linearGradient id="np252395" x1="0" y1="0" x2="1" y2="1"><stop offset="0" stop-color="#ffffff"/><stop offset="1" stop-color="#e4e8f0"/></linearGradient></defs>
<path d="M6.8 9 L34 8 L34.5 44 L7.2 47.2 Z" fill="url(#np252395)" stroke="#9a9ab8" stroke-width="0.9"/>
<path d="M6.8 9 L7.2 47.2" stroke="#8888cc" stroke-width="1.6"/>
<path d="M34.2 9 L34.5 44 L7.2 47.2" fill="none" stroke="#b8b8c8" stroke-width="0.9"/>
<path d="M7.5 8.5 L33.5 7.5 L33.8 11.5 L7.8 12.5 Z" fill="#e8dc9a"/>
<ellipse cx="10.0" cy="8.20" rx="1.7" ry="2.4" fill="#efe09a" stroke="#7a7050" stroke-width="0.8"/><ellipse cx="13.6" cy="8.08" rx="1.7" ry="2.4" fill="#efe09a" stroke="#7a7050" stroke-width="0.8"/><ellipse cx="17.2" cy="7.96" rx="1.7" ry="2.4" fill="#efe09a" stroke="#7a7050" stroke-width="0.8"/><ellipse cx="20.8" cy="7.84" rx="1.7" ry="2.4" fill="#efe09a" stroke="#7a7050" stroke-width="0.8"/><ellipse cx="24.4" cy="7.72" rx="1.7" ry="2.4" fill="#efe09a" stroke="#7a7050" stroke-width="0.8"/><ellipse cx="28.0" cy="7.60" rx="1.7" ry="2.4" fill="#efe09a" stroke="#7a7050" stroke-width="0.8"/><ellipse cx="31.6" cy="7.48" rx="1.7" ry="2.4" fill="#efe09a" stroke="#7a7050" stroke-width="0.8"/>
<path d="M11 15.7 L16.5 15.5 M11 19.2 L16.5 19 M11.2 25.8 L28 25 M11.2 28.8 L28 28 M11.2 31.8 L28 31 M11.2 39.5 L16.5 39.3 M11.2 42.5 L16.5 42.3" stroke="#2a2a30" stroke-width="1.3"/>
</svg>
<div class="t" style="left:301px;top:403.0px">genera_portadas</div>
<div class="t g" style="left:301px;top:416.0px">Archivo PL</div>
<div class="t g" style="left:301px;top:429.0px">4 KB</div>
<svg style="left:468px;top:396px" width="48" height="52" viewBox="0 0 48 52">
<defs><linearGradient id="pg472400" x1="0" y1="0" x2="1" y2="1"><stop offset="0" stop-color="#ffffff"/><stop offset="1" stop-color="#ececec"/></linearGradient></defs>
<path d="M4.5 4.5 L33.5 4.5 L42.5 13.5 L42.5 51 L4.5 51 Z" fill="url(#pg472400)" stroke="#6e6e6e" stroke-width="1.1"/>
<path d="M33.5 4.5 L33.5 13.5 L42.5 13.5 Z" fill="#d8d8d8" stroke="#8a8a8a" stroke-width="0.9"/>
<rect x="10.5" y="18.5" width="25" height="22" fill="#f8f8fa" stroke="#1a1a3a" stroke-width="1.2"/>
<rect x="10.5" y="18" width="25" height="3.6" fill="#1a2470"/>
<circle cx="13" cy="19.8" r="0.7" fill="#fff"/><circle cx="28" cy="19.8" r="0.7" fill="#fff"/><circle cx="30.6" cy="19.8" r="0.7" fill="#fff"/><circle cx="33.2" cy="19.8" r="0.7" fill="#fff"/>
<path d="M15.2 25 h3.2 v4 h-4.2 v-1.6 h1 z" fill="#6a1828"/><circle cx="16.8" cy="26.3" r="0.6" fill="#fff"/>
<path d="M22.2 25 h3.2 v4 h-4.2 v-1.6 h1 z" fill="#1a6a6a"/><circle cx="23.8" cy="26.3" r="0.6" fill="#fff"/>
<path d="M29.2 25 h3.2 v4 h-4.2 v-1.6 h1 z" fill="#1a2a80"/><circle cx="30.8" cy="26.3" r="0.6" fill="#fff"/>
<path d="M15.2 32 h3.2 v4 h-4.2 v-1.6 h1 z" fill="#5a1a5a"/><circle cx="16.8" cy="33.3" r="0.6" fill="#fff"/>
<path d="M22.2 32 h3.2 v4 h-4.2 v-1.6 h1 z" fill="#6a5a1a"/><circle cx="23.8" cy="33.3" r="0.6" fill="#fff"/>
<path d="M29.2 32 h3.2 v4 h-4.2 v-1.6 h1 z" fill="#7a2a1a"/><circle cx="30.8" cy="33.3" r="0.6" fill="#fff"/>
<rect x="14" y="29.8" width="4" height="0.8" fill="#c07080"/><rect x="21" y="29.8" width="4" height="0.8" fill="#608aa0"/><rect x="28" y="29.8" width="4" height="0.8" fill="#8080b0"/>
<rect x="14" y="36.8" width="4" height="0.8" fill="#906090"/><rect x="21" y="36.8" width="4" height="0.8" fill="#a09050"/><rect x="28" y="36.8" width="4" height="0.8" fill="#b06050"/>
<path d="M11 40.5 L35.5 40.5 L35.5 19" fill="none" stroke="#202030" stroke-width="1.2"/>
</svg>
<div class="t" style="left:519px;top:403.0px;letter-spacing:0">LPRng-3.8.29-1cb.el4.sme.i38...</div>
<div class="t g" style="left:519px;top:416.0px">Archivo RPM</div>
<div class="t g" style="left:519px;top:429.0px">2.043 KB</div>
<svg style="left:250px;top:452px" width="48" height="52" viewBox="0 0 48 52">
<defs><linearGradient id="pg254456" x1="0" y1="0" x2="1" y2="1"><stop offset="0" stop-color="#ffffff"/><stop offset="1" stop-color="#ececec"/></linearGradient></defs>
<path d="M4.5 4.5 L33.5 4.5 L42.5 13.5 L42.5 51 L4.5 51 Z" fill="url(#pg254456)" stroke="#6e6e6e" stroke-width="1.1"/>
<path d="M33.5 4.5 L33.5 13.5 L42.5 13.5 Z" fill="#d8d8d8" stroke="#8a8a8a" stroke-width="0.9"/>
<rect x="10.5" y="18.5" width="25" height="22" fill="#f8f8fa" stroke="#1a1a3a" stroke-width="1.2"/>
<rect x="10.5" y="18" width="25" height="3.6" fill="#1a2470"/>
<circle cx="13" cy="19.8" r="0.7" fill="#fff"/><circle cx="28" cy="19.8" r="0.7" fill="#fff"/><circle cx="30.6" cy="19.8" r="0.7" fill="#fff"/><circle cx="33.2" cy="19.8" r="0.7" fill="#fff"/>
<path d="M15.2 25 h3.2 v4 h-4.2 v-1.6 h1 z" fill="#6a1828"/><circle cx="16.8" cy="26.3" r="0.6" fill="#fff"/>
<path d="M22.2 25 h3.2 v4 h-4.2 v-1.6 h1 z" fill="#1a6a6a"/><circle cx="23.8" cy="26.3" r="0.6" fill="#fff"/>
<path d="M29.2 25 h3.2 v4 h-4.2 v-1.6 h1 z" fill="#1a2a80"/><circle cx="30.8" cy="26.3" r="0.6" fill="#fff"/>
<path d="M15.2 32 h3.2 v4 h-4.2 v-1.6 h1 z" fill="#5a1a5a"/><circle cx="16.8" cy="33.3" r="0.6" fill="#fff"/>
<path d="M22.2 32 h3.2 v4 h-4.2 v-1.6 h1 z" fill="#6a5a1a"/><circle cx="23.8" cy="33.3" r="0.6" fill="#fff"/>
<path d="M29.2 32 h3.2 v4 h-4.2 v-1.6 h1 z" fill="#7a2a1a"/><circle cx="30.8" cy="33.3" r="0.6" fill="#fff"/>
<rect x="14" y="29.8" width="4" height="0.8" fill="#c07080"/><rect x="21" y="29.8" width="4" height="0.8" fill="#608aa0"/><rect x="28" y="29.8" width="4" height="0.8" fill="#8080b0"/>
<rect x="14" y="36.8" width="4" height="0.8" fill="#906090"/><rect x="21" y="36.8" width="4" height="0.8" fill="#a09050"/><rect x="28" y="36.8" width="4" height="0.8" fill="#b06050"/>
<path d="M11 40.5 L35.5 40.5 L35.5 19" fill="none" stroke="#202030" stroke-width="1.2"/>
</svg>
<div class="t" style="left:301px;top:459.0px">matlab</div>
<div class="t g" style="left:301px;top:472.0px">Archivo</div>
<div class="t g" style="left:301px;top:485.0px">1 KB</div>
<svg style="left:470px;top:451px" width="44" height="52" viewBox="0 0 44 52">
<defs><linearGradient id="np470451" x1="0" y1="0" x2="1" y2="1"><stop offset="0" stop-color="#ffffff"/><stop offset="1" stop-color="#e4e8f0"/></linearGradient></defs>
<path d="M6.8 9 L34 8 L34.5 44 L7.2 47.2 Z" fill="url(#np470451)" stroke="#9a9ab8" stroke-width="0.9"/>
<path d="M6.8 9 L7.2 47.2" stroke="#8888cc" stroke-width="1.6"/>
<path d="M34.2 9 L34.5 44 L7.2 47.2" fill="none" stroke="#b8b8c8" stroke-width="0.9"/>
<path d="M7.5 8.5 L33.5 7.5 L33.8 11.5 L7.8 12.5 Z" fill="#e8dc9a"/>
<ellipse cx="10.0" cy="8.20" rx="1.7" ry="2.4" fill="#efe09a" stroke="#7a7050" stroke-width="0.8"/><ellipse cx="13.6" cy="8.08" rx="1.7" ry="2.4" fill="#efe09a" stroke="#7a7050" stroke-width="0.8"/><ellipse cx="17.2" cy="7.96" rx="1.7" ry="2.4" fill="#efe09a" stroke="#7a7050" stroke-width="0.8"/><ellipse cx="20.8" cy="7.84" rx="1.7" ry="2.4" fill="#efe09a" stroke="#7a7050" stroke-width="0.8"/><ellipse cx="24.4" cy="7.72" rx="1.7" ry="2.4" fill="#efe09a" stroke="#7a7050" stroke-width="0.8"/><ellipse cx="28.0" cy="7.60" rx="1.7" ry="2.4" fill="#efe09a" stroke="#7a7050" stroke-width="0.8"/><ellipse cx="31.6" cy="7.48" rx="1.7" ry="2.4" fill="#efe09a" stroke="#7a7050" stroke-width="0.8"/>
<path d="M11 15.7 L16.5 15.5 M11 19.2 L16.5 19 M11.2 25.8 L28 25 M11.2 28.8 L28 28 M11.2 31.8 L28 31 M11.2 39.5 L16.5 39.3 M11.2 42.5 L16.5 42.3" stroke="#2a2a30" stroke-width="1.3"/>
</svg>
<div class="t" style="left:519px;top:459.0px">matlab_</div>
<div class="t g" style="left:519px;top:472.0px">Documento de texto</div>
<div class="t g" style="left:519px;top:485.0px">1 KB</div>
<svg style="left:252px;top:507px" width="44" height="52" viewBox="0 0 44 52">
<defs><linearGradient id="np252507" x1="0" y1="0" x2="1" y2="1"><stop offset="0" stop-color="#ffffff"/><stop offset="1" stop-color="#e4e8f0"/></linearGradient></defs>
<path d="M6.8 9 L34 8 L34.5 44 L7.2 47.2 Z" fill="url(#np252507)" stroke="#9a9ab8" stroke-width="0.9"/>
<path d="M6.8 9 L7.2 47.2" stroke="#8888cc" stroke-width="1.6"/>
<path d="M34.2 9 L34.5 44 L7.2 47.2" fill="none" stroke="#b8b8c8" stroke-width="0.9"/>
<path d="M7.5 8.5 L33.5 7.5 L33.8 11.5 L7.8 12.5 Z" fill="#e8dc9a"/>
<ellipse cx="10.0" cy="8.20" rx="1.7" ry="2.4" fill="#efe09a" stroke="#7a7050" stroke-width="0.8"/><ellipse cx="13.6" cy="8.08" rx="1.7" ry="2.4" fill="#efe09a" stroke="#7a7050" stroke-width="0.8"/><ellipse cx="17.2" cy="7.96" rx="1.7" ry="2.4" fill="#efe09a" stroke="#7a7050" stroke-width="0.8"/><ellipse cx="20.8" cy="7.84" rx="1.7" ry="2.4" fill="#efe09a" stroke="#7a7050" stroke-width="0.8"/><ellipse cx="24.4" cy="7.72" rx="1.7" ry="2.4" fill="#efe09a" stroke="#7a7050" stroke-width="0.8"/><ellipse cx="28.0" cy="7.60" rx="1.7" ry="2.4" fill="#efe09a" stroke="#7a7050" stroke-width="0.8"/><ellipse cx="31.6" cy="7.48" rx="1.7" ry="2.4" fill="#efe09a" stroke="#7a7050" stroke-width="0.8"/>
<path d="M11 15.7 L16.5 15.5 M11 19.2 L16.5 19 M11.2 25.8 L28 25 M11.2 28.8 L28 28 M11.2 31.8 L28 31 M11.2 39.5 L16.5 39.3 M11.2 42.5 L16.5 42.3" stroke="#2a2a30" stroke-width="1.3"/>
</svg>
<div class="t" style="left:301px;top:515.0px">matlab_280308</div>
<div class="t g" style="left:301px;top:528.0px">Documento de texto</div>
<div class="t g" style="left:301px;top:541.0px">1 KB</div>
<svg style="left:468px;top:508px" width="48" height="52" viewBox="0 0 48 52">
<defs><linearGradient id="pg472512" x1="0" y1="0" x2="1" y2="1"><stop offset="0" stop-color="#ffffff"/><stop offset="1" stop-color="#ececec"/></linearGradient></defs>
<path d="M4.5 4.5 L33.5 4.5 L42.5 13.5 L42.5 51 L4.5 51 Z" fill="url(#pg472512)" stroke="#6e6e6e" stroke-width="1.1"/>
<path d="M33.5 4.5 L33.5 13.5 L42.5 13.5 Z" fill="#d8d8d8" stroke="#8a8a8a" stroke-width="0.9"/>
<rect x="10.5" y="18.5" width="25" height="22" fill="#f8f8fa" stroke="#1a1a3a" stroke-width="1.2"/>
<rect x="10.5" y="18" width="25" height="3.6" fill="#1a2470"/>
<circle cx="13" cy="19.8" r="0.7" fill="#fff"/><circle cx="28" cy="19.8" r="0.7" fill="#fff"/><circle cx="30.6" cy="19.8" r="0.7" fill="#fff"/><circle cx="33.2" cy="19.8" r="0.7" fill="#fff"/>
<path d="M15.2 25 h3.2 v4 h-4.2 v-1.6 h1 z" fill="#6a1828"/><circle cx="16.8" cy="26.3" r="0.6" fill="#fff"/>
<path d="M22.2 25 h3.2 v4 h-4.2 v-1.6 h1 z" fill="#1a6a6a"/><circle cx="23.8" cy="26.3" r="0.6" fill="#fff"/>
<path d="M29.2 25 h3.2 v4 h-4.2 v-1.6 h1 z" fill="#1a2a80"/><circle cx="30.8" cy="26.3" r="0.6" fill="#fff"/>
<path d="M15.2 32 h3.2 v4 h-4.2 v-1.6 h1 z" fill="#5a1a5a"/><circle cx="16.8" cy="33.3" r="0.6" fill="#fff"/>
<path d="M22.2 32 h3.2 v4 h-4.2 v-1.6 h1 z" fill="#6a5a1a"/><circle cx="23.8" cy="33.3" r="0.6" fill="#fff"/>
<path d="M29.2 32 h3.2 v4 h-4.2 v-1.6 h1 z" fill="#7a2a1a"/><circle cx="30.8" cy="33.3" r="0.6" fill="#fff"/>
<rect x="14" y="29.8" width="4" height="0.8" fill="#c07080"/><rect x="21" y="29.8" width="4" height="0.8" fill="#608aa0"/><rect x="28" y="29.8" width="4" height="0.8" fill="#8080b0"/>
<rect x="14" y="36.8" width="4" height="0.8" fill="#906090"/><rect x="21" y="36.8" width="4" height="0.8" fill="#a09050"/><rect x="28" y="36.8" width="4" height="0.8" fill="#b06050"/>
<path d="M11 40.5 L35.5 40.5 L35.5 19" fill="none" stroke="#202030" stroke-width="1.2"/>
</svg>
<div class="t" style="left:519px;top:515.0px">printcap</div>
<div class="t g" style="left:519px;top:528.0px">Archivo</div>
<div class="t g" style="left:519px;top:541.0px">1 KB</div>
<svg style="left:250px;top:564px" width="48" height="52" viewBox="0 0 48 52">
<defs><linearGradient id="pg254568" x1="0" y1="0" x2="1" y2="1"><stop offset="0" stop-color="#ffffff"/><stop offset="1" stop-color="#ececec"/></linearGradient></defs>
<path d="M4.5 4.5 L33.5 4.5 L42.5 13.5 L42.5 51 L4.5 51 Z" fill="url(#pg254568)" stroke="#6e6e6e" stroke-width="1.1"/>
<path d="M33.5 4.5 L33.5 13.5 L42.5 13.5 Z" fill="#d8d8d8" stroke="#8a8a8a" stroke-width="0.9"/>
<rect x="10.5" y="18.5" width="25" height="22" fill="#f8f8fa" stroke="#1a1a3a" stroke-width="1.2"/>
<rect x="10.5" y="18" width="25" height="3.6" fill="#1a2470"/>
<circle cx="13" cy="19.8" r="0.7" fill="#fff"/><circle cx="28" cy="19.8" r="0.7" fill="#fff"/><circle cx="30.6" cy="19.8" r="0.7" fill="#fff"/><circle cx="33.2" cy="19.8" r="0.7" fill="#fff"/>
<path d="M15.2 25 h3.2 v4 h-4.2 v-1.6 h1 z" fill="#6a1828"/><circle cx="16.8" cy="26.3" r="0.6" fill="#fff"/>
<path d="M22.2 25 h3.2 v4 h-4.2 v-1.6 h1 z" fill="#1a6a6a"/><circle cx="23.8" cy="26.3" r="0.6" fill="#fff"/>
<path d="M29.2 25 h3.2 v4 h-4.2 v-1.6 h1 z" fill="#1a2a80"/><circle cx="30.8" cy="26.3" r="0.6" fill="#fff"/>
<path d="M15.2 32 h3.2 v4 h-4.2 v-1.6 h1 z" fill="#5a1a5a"/><circle cx="16.8" cy="33.3" r="0.6" fill="#fff"/>
<path d="M22.2 32 h3.2 v4 h-4.2 v-1.6 h1 z" fill="#6a5a1a"/><circle cx="23.8" cy="33.3" r="0.6" fill="#fff"/>
<path d="M29.2 32 h3.2 v4 h-4.2 v-1.6 h1 z" fill="#7a2a1a"/><circle cx="30.8" cy="33.3" r="0.6" fill="#fff"/>
<rect x="14" y="29.8" width="4" height="0.8" fill="#c07080"/><rect x="21" y="29.8" width="4" height="0.8" fill="#608aa0"/><rect x="28" y="29.8" width="4" height="0.8" fill="#8080b0"/>
<rect x="14" y="36.8" width="4" height="0.8" fill="#906090"/><rect x="21" y="36.8" width="4" height="0.8" fill="#a09050"/><rect x="28" y="36.8" width="4" height="0.8" fill="#b06050"/>
<path d="M11 40.5 L35.5 40.5 L35.5 19" fill="none" stroke="#202030" stroke-width="1.2"/>
</svg>
<div class="t" style="left:301px;top:571.0px">prueba</div>
<div class="t g" style="left:301px;top:584.0px">Archivo</div>
<div class="t g" style="left:301px;top:597.0px">1 KB</div>
<svg style="left:468px;top:564px" width="48" height="52" viewBox="0 0 48 52">
<defs><linearGradient id="pg472568" x1="0" y1="0" x2="1" y2="1"><stop offset="0" stop-color="#ffffff"/><stop offset="1" stop-color="#ececec"/></linearGradient></defs>
<path d="M4.5 4.5 L33.5 4.5 L42.5 13.5 L42.5 51 L4.5 51 Z" fill="url(#pg472568)" stroke="#6e6e6e" stroke-width="1.1"/>
<path d="M33.5 4.5 L33.5 13.5 L42.5 13.5 Z" fill="#d8d8d8" stroke="#8a8a8a" stroke-width="0.9"/>
<rect x="10.5" y="18.5" width="25" height="22" fill="#f8f8fa" stroke="#1a1a3a" stroke-width="1.2"/>
<rect x="10.5" y="18" width="25" height="3.6" fill="#1a2470"/>
<circle cx="13" cy="19.8" r="0.7" fill="#fff"/><circle cx="28" cy="19.8" r="0.7" fill="#fff"/><circle cx="30.6" cy="19.8" r="0.7" fill="#fff"/><circle cx="33.2" cy="19.8" r="0.7" fill="#fff"/>
<path d="M15.2 25 h3.2 v4 h-4.2 v-1.6 h1 z" fill="#6a1828"/><circle cx="16.8" cy="26.3" r="0.6" fill="#fff"/>
<path d="M22.2 25 h3.2 v4 h-4.2 v-1.6 h1 z" fill="#1a6a6a"/><circle cx="23.8" cy="26.3" r="0.6" fill="#fff"/>
<path d="M29.2 25 h3.2 v4 h-4.2 v-1.6 h1 z" fill="#1a2a80"/><circle cx="30.8" cy="26.3" r="0.6" fill="#fff"/>
<path d="M15.2 32 h3.2 v4 h-4.2 v-1.6 h1 z" fill="#5a1a5a"/><circle cx="16.8" cy="33.3" r="0.6" fill="#fff"/>
<path d="M22.2 32 h3.2 v4 h-4.2 v-1.6 h1 z" fill="#6a5a1a"/><circle cx="23.8" cy="33.3" r="0.6" fill="#fff"/>
<path d="M29.2 32 h3.2 v4 h-4.2 v-1.6 h1 z" fill="#7a2a1a"/><circle cx="30.8" cy="33.3" r="0.6" fill="#fff"/>
<rect x="14" y="29.8" width="4" height="0.8" fill="#c07080"/><rect x="21" y="29.8" width="4" height="0.8" fill="#608aa0"/><rect x="28" y="29.8" width="4" height="0.8" fill="#8080b0"/>
<rect x="14" y="36.8" width="4" height="0.8" fill="#906090"/><rect x="21" y="36.8" width="4" height="0.8" fill="#a09050"/><rect x="28" y="36.8" width="4" height="0.8" fill="#b06050"/>
<path d="M11 40.5 L35.5 40.5 L35.5 19" fill="none" stroke="#202030" stroke-width="1.2"/>
</svg>
<div class="t" style="left:519px;top:571.0px">ps_word</div>
<div class="t g" style="left:519px;top:584.0px">Archivo</div>
<div class="t g" style="left:519px;top:597.0px">1 KB</div>
<div class="a" style="left:0;top:594px;width:795px;height:1px;background:#b0d4ff"></div>
<div class="a" style="left:0;top:595px;width:795px;height:4px;background:linear-gradient(#1448d6,#0c34b0 60%,#0a2a98)"></div>
<div class="a" style="left:0;top:599px;width:795px;height:4px;background:linear-gradient(#2e3a22,#44522e)"></div>
</body></html>
